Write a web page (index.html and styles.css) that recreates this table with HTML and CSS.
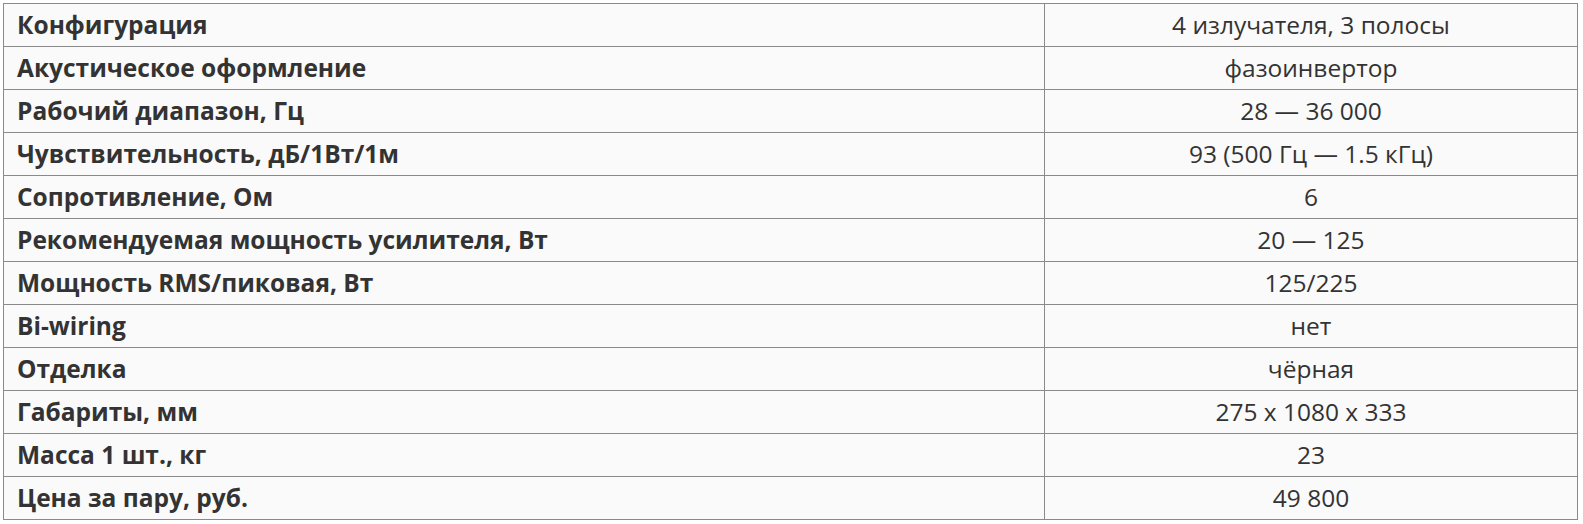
FILE: index.html
```html
<!DOCTYPE html>
<html lang="ru">
<head>
<meta charset="utf-8">
<link rel="stylesheet" href="styles.css">
</head>
<body>
<table class="specs">
<tbody>
<tr><th>Конфигурация</th><td>4 излучателя, 3 полосы</td></tr>
<tr><th>Акустическое оформление</th><td>фазоинвертор</td></tr>
<tr><th>Рабочий диапазон, Гц</th><td>28 — 36 000</td></tr>
<tr><th>Чувствительность, дБ/1Вт/1м</th><td>93 (500 Гц — 1.5 кГц)</td></tr>
<tr><th>Сопротивление, Ом</th><td>6</td></tr>
<tr><th>Рекомендуемая мощность усилителя, Вт</th><td>20 — 125</td></tr>
<tr><th>Мощность RMS/пиковая, Вт</th><td>125/225</td></tr>
<tr><th>Bi-wiring</th><td>нет</td></tr>
<tr><th>Отделка</th><td>чёрная</td></tr>
<tr><th>Габариты, мм</th><td>275 x 1080 x 333</td></tr>
<tr><th>Масса 1 шт., кг</th><td>23</td></tr>
<tr><th>Цена за пару, руб.</th><td>49 800</td></tr>
</tbody>
</table>
</body>
</html>
```
FILE: styles.css
```css
html, body {
  margin: 0;
  padding: 0;
  background: #ffffff;
}
body {
  padding: 3px 0 0 3px;
  font-family: "Open Sans", "Noto Sans", sans-serif;
  color: #333333;
}
.specs {
  border-collapse: collapse;
  width: 1575px;
  background: #fafafa;
}
.specs th,
.specs td {
  border: 1px solid #8a8a8a;
  height: 43px;
  padding: 0 13px;
  box-sizing: border-box;
  font-size: 24.5px;
  line-height: 32px;
  vertical-align: middle;
}
.specs th {
  width: 1041px;
  text-align: left;
  font-weight: 700;
}
.specs td {
  text-align: center;
  font-weight: 400;
}
```
